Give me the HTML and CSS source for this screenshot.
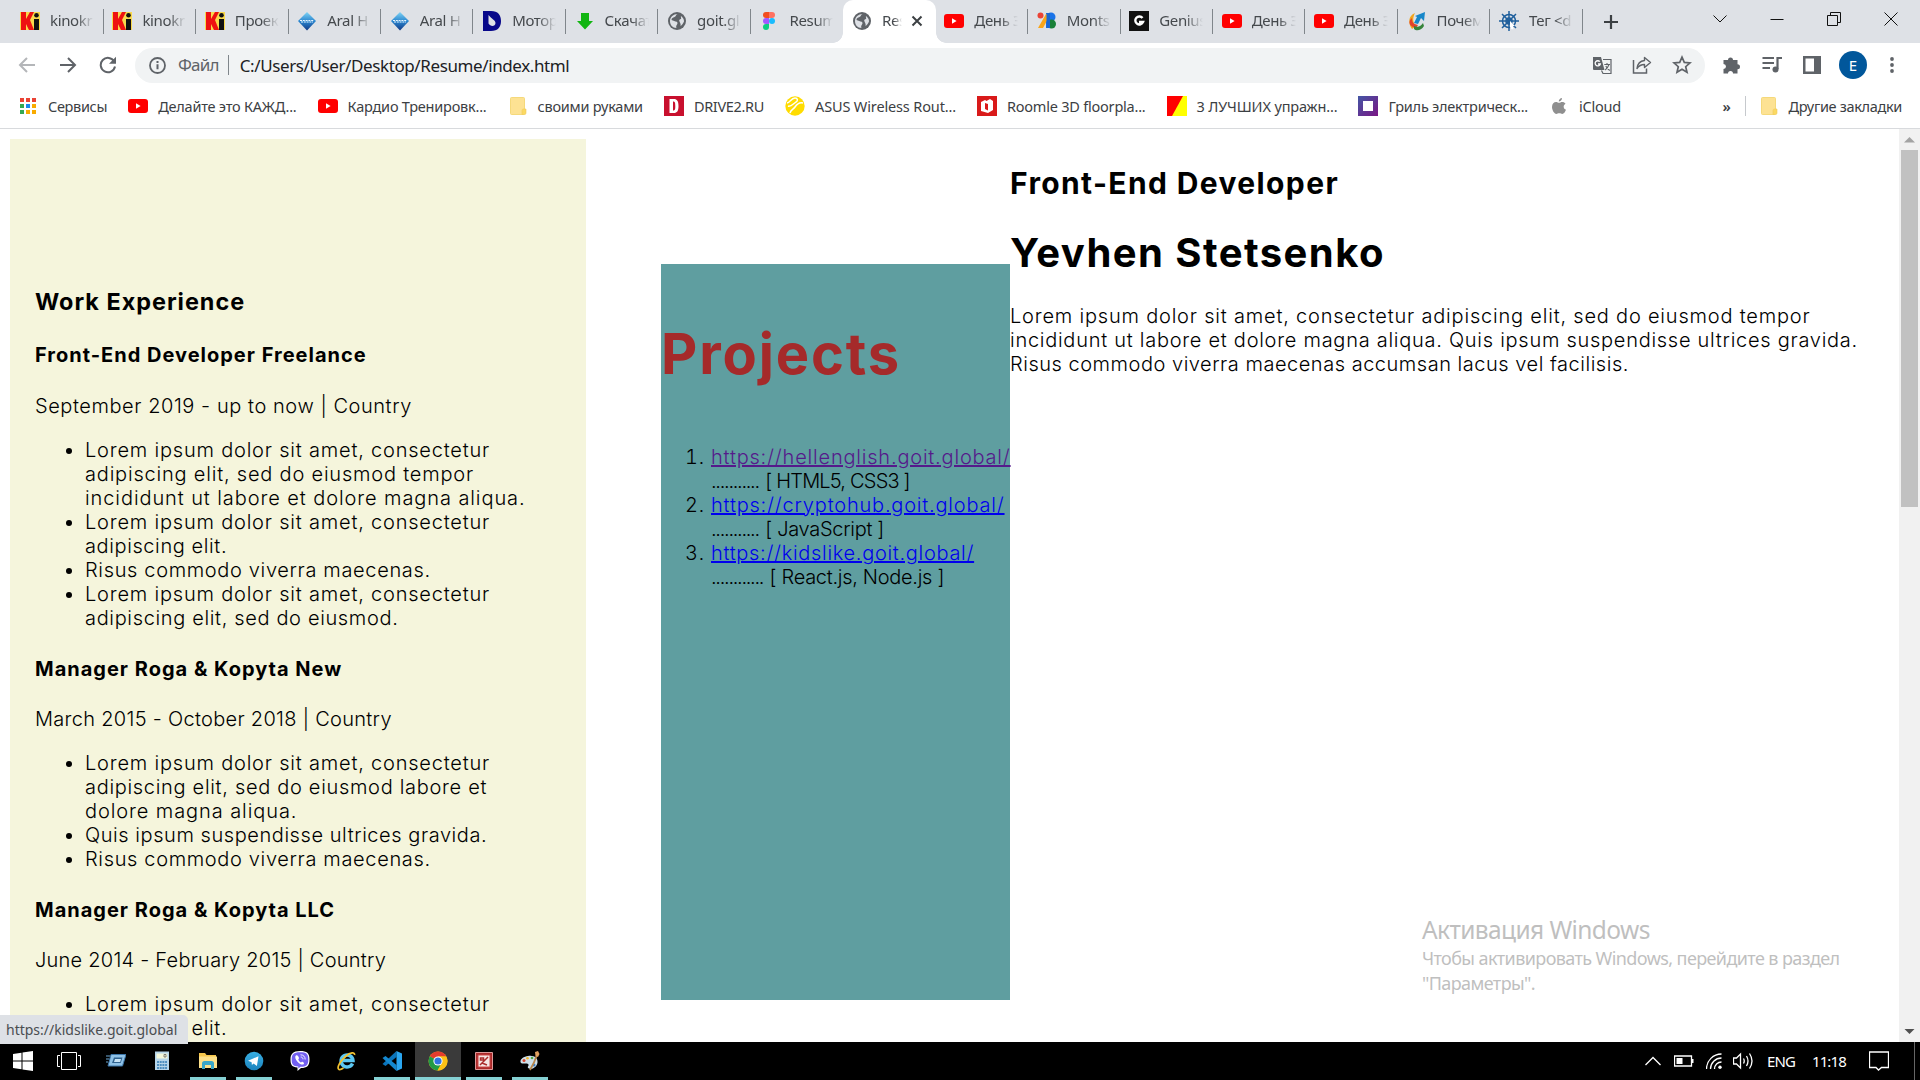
FILE: index.html
```html
<!DOCTYPE html>
<html lang="ru">
<head>
<meta charset="utf-8">
<title>Resume</title>
<link rel="stylesheet" href="styles.css">
</head>
<body>
<svg class="defs" width="0" height="0" aria-hidden="true">
  <defs>
    <linearGradient id="ggem" x1="0" y1="0" x2="0" y2="1"><stop offset="0" stop-color="#7fd3f4"/><stop offset=".5" stop-color="#2a86cf"/><stop offset="1" stop-color="#123a86"/></linearGradient>
    <linearGradient id="gpur" x1="0" y1="0" x2="1" y2="1"><stop offset="0" stop-color="#4357a5"/><stop offset="1" stop-color="#7a1684"/></linearGradient>
    <linearGradient id="gtg" x1="0" y1="0" x2="0" y2="1"><stop offset="0" stop-color="#38aee2"/><stop offset="1" stop-color="#1c83bd"/></linearGradient>
  </defs>
  <symbol id="ki" viewBox="0 0 20 20"><path d="M0 1h20v18H0z" fill="#f9d94c"/><path d="M1 1h5v7l4-7h4l-4 8 4 10h-5L6 13v6H1z" fill="#ee1111"/><path d="M14 8h5v11h-5z" fill="#111"/><circle cx="16.500" cy="4.200" r="2.300" fill="#111"/></symbol>
  <symbol id="gem" viewBox="0 0 20 20"><path d="M10 1l9 9-9 9.500L1 10z" fill="url(#ggem)"/><path d="M3 9.500h14M4 11h12" stroke="#e8f5ff" stroke-width="1" stroke-dasharray="2 .8"/></symbol>
  <symbol id="dblue" viewBox="0 0 20 20"><path d="M1 0h8c7 0 10 4 10 10s-3 10-10 10H1zM6.500 4v8.500c2 3.500 7 3 7-.5 0-3-4-4-7-8z" fill="#08088a" fill-rule="evenodd"/></symbol>
  <symbol id="down" viewBox="0 0 20 20"><path d="M6 2h8v8h4l-8 8.500L2 10h4z" fill="#12b512"/></symbol>
  <symbol id="globe" viewBox="0 0 20 20"><circle cx="10" cy="10" r="9" fill="#5f6368"/><path d="M10.500 3c-2 1-1.500 2.500-3 3s-3 1-3 3l4 1.500c2 0 2.500 1.500 1.500 3s-1 2.500-.5 3.500c-4 0-6.500-3-6.500-7s3.500-7 7.500-7zM14 5c2 1.500 3 3 3 5.500-1 2-2 3.500-3.500 4.500.5-2.500-.5-3-1-4.500-1-1.500.5-2.500 1.500-2.500.5-1-.5-2 0-3z" fill="#dee1e6"/></symbol>
  <symbol id="figma" viewBox="0 0 20 20"><path d="M10 1H7a3 3 0 000 6h3z" fill="#f24e1e"/><path d="M10 1h3a3 3 0 010 6h-3z" fill="#ff7262"/><path d="M10 7H7a3 3 0 000 6h3z" fill="#a259ff"/><circle cx="13" cy="10" r="3" fill="#1abcfe"/><path d="M7 13h3v3a3 3 0 11-3-3z" fill="#0acf83"/></symbol>
  <symbol id="yt" viewBox="0 0 20 20"><rect y="3" width="20" height="14" rx="3" fill="#f00"/><path d="M8 7.300v5.400l4.600-2.700z" fill="#fff"/></symbol>
  <symbol id="gfont" viewBox="0 0 20 20"><circle cx="3.500" cy="4.500" r="3" fill="#ea4335"/><path d="M9 2h4v15H9z" fill="#1a73e8"/><circle cx="14" cy="6" r="4.500" fill="#1a73e8"/><circle cx="14.500" cy="13" r="4.500" fill="#188038"/><path d="M9 3L1 17h5l6-11V3z" fill="#f9a51a"/><path d="M9.500 2h3.500v15H9.500z" fill="#1967d2"/></symbol>
  <symbol id="genius" viewBox="0 0 20 20"><path d="M0 0h20v20H0z" fill="#111"/><path d="M13.500 7a4 4 0 10.500 4h-4" fill="none" stroke="#fff" stroke-width="2.400"/></symbol>
  <symbol id="swirl" viewBox="0 0 20 20"><path d="M8 2C1 5 1 12 5 18l4-3C5 11 6 6 8 2z" fill="#f2a51c"/><path d="M5 7c-5 4-2 9 4 10l2-3c-5-1-6-3-6-7z" fill="#e2432d"/><path d="M8 5l10-4-1 9-3-3-3 6-4-1 3-6z" fill="#1787c9"/><path d="M7 15c4 2 7 0 9-3l1 3c-3 5-8 5-10 3z" fill="#37843a"/></symbol>
  <symbol id="wheel" viewBox="0 0 20 20"><g fill="none" stroke="#1f5f9c" stroke-width="1.500"><circle cx="10" cy="10" r="6.500"/><circle cx="10" cy="10" r="3"/><path d="M10 0v20M0 10h20M3 3l14 14M17 3L3 17"/></g><path d="M11 10l5 5-2 .3.500 3-2 0-1.500-2z" fill="#fff"/></symbol>
  <symbol id="apps" viewBox="0 0 20 20"><path d="M2 2h4v4H2zM8 2h4v4H8zM14 2h4v4h-4z" fill="#ea4335"/><path d="M2 8h4v4H2zM2 14h4v4H2z" fill="#34a853"/><path d="M8 8h4v4H8z" fill="#1a88f0"/><path d="M14 8h4v4h-4zM8 14h4v4H8zM14 14h4v4h-4z" fill="#f9ab00"/></symbol>
  <symbol id="folder" viewBox="0 0 20 20"><rect x="2.500" y="1.500" width="14" height="17" rx="1" fill="#fde293" stroke="#f5d97b"/><path d="M14 18.500v-4q0-1.500 1.500-1.500H18v4q0 1.500-1.500 1.500z" fill="#fbd962" stroke="#f0cb5a" stroke-width=".6"/></symbol>
  <symbol id="drive" viewBox="0 0 20 20"><path d="M0 0h20v20H0z" fill="#c8102e"/><path d="M5.500 3h4.500c3 0 4.500 2 4.500 7s-1.500 7-4.500 7H5.500zM9 5.500v9c2 0 2.300-1 2.300-4.500S11 5.500 9 5.500z" fill="#fff" fill-rule="evenodd"/></symbol>
  <symbol id="asus" viewBox="0 0 20 20"><circle cx="10" cy="10" r="9.700" fill="#ffdc00"/><path d="M2 7c3 0 4-5 8-5 3 0 3 3 1 4-3 2-5 5-8 4M5 17c1-4 3-3 5-6s4-5 8-4" fill="none" stroke="#fff" stroke-width="1.500"/></symbol>
  <symbol id="roomle" viewBox="0 0 20 20"><path d="M0 0h20v20H0z" fill="#d91a1a"/><path d="M4 6l4-2 1.500 1L13 3l3 2v9l-5 3-7-2zM8 7v6l3 1.500V8z" fill="#fff" fill-rule="evenodd"/></symbol>
  <symbol id="diag" viewBox="0 0 20 20"><path d="M0 0h20v20H0z" fill="#ff0"/><path d="M0 0h16L5 20H0z" fill="#f00"/></symbol>
  <symbol id="grill" viewBox="0 0 20 20"><path d="M0 0h20v20H0z" fill="url(#gpur)"/><path d="M5 5h10v10H5z" fill="#fff"/></symbol>
  <symbol id="apple" viewBox="0 0 20 20"><path d="M13 2c0 2-1.500 3.500-3.200 3.500C9.600 3.800 11.200 2.100 13 2zM10 6.800c1 0 1.700-.8 3.300-.8 1.300 0 2.500.7 3.200 1.700-2.700 1.600-2.300 5 .5 6.100-.8 2.200-2.200 4.200-3.700 4.200-1.200 0-1.500-.7-3-.7s-1.900.7-3 .7c-2 0-4.300-4-4.300-7C3 7.800 5 6 7 6c1.300 0 2.200.8 3 .8z" fill="#8f8f8f"/></symbol>
</svg>

<header class="browser">
  <div class="strip">
    <div class="tabs">
      <div class="tab"><svg><use href="#ki"/></svg><span>kinokr</span></div>
      <div class="tab"><svg><use href="#ki"/></svg><span>kinokr</span></div>
      <div class="tab"><svg><use href="#ki"/></svg><span>Проек</span></div>
      <div class="tab"><svg><use href="#gem"/></svg><span>Aral H</span></div>
      <div class="tab"><svg><use href="#gem"/></svg><span>Aral H</span></div>
      <div class="tab"><svg><use href="#dblue"/></svg><span>Мотор</span></div>
      <div class="tab"><svg><use href="#down"/></svg><span>Скачат</span></div>
      <div class="tab"><svg><use href="#globe"/></svg><span>goit.gl</span></div>
      <div class="tab before"><svg><use href="#figma"/></svg><span>Resum</span></div>
      <div class="tab active"><svg><use href="#globe"/></svg><span>Res</span><svg class="close" viewBox="0 0 12 12"><path d="M1.500 1.500l9 9M10.500 1.500l-9 9" stroke="#3c4043" stroke-width="2"/></svg></div>
      <div class="tab"><svg><use href="#yt"/></svg><span>День З</span></div>
      <div class="tab"><svg><use href="#gfont"/></svg><span>Monts</span></div>
      <div class="tab"><svg><use href="#genius"/></svg><span>Genius</span></div>
      <div class="tab"><svg><use href="#yt"/></svg><span>День З</span></div>
      <div class="tab"><svg><use href="#yt"/></svg><span>День З</span></div>
      <div class="tab"><svg><use href="#swirl"/></svg><span>Почем</span></div>
      <div class="tab"><svg><use href="#wheel"/></svg><span>Тег &lt;d</span></div>
    </div>
    <svg class="plus" viewBox="0 0 16 16"><path d="M8 1v14M1 8h14" stroke="#3c4043" stroke-width="2.200"/></svg>
    <div class="winctl">
      <svg width="14" height="14" viewBox="0 0 14 14"><path d="M.5 3.500L7 10l6.500-6.500"/></svg>
      <svg width="14" height="14" viewBox="0 0 14 14"><path d="M.5 7.500h13"/></svg>
      <svg width="14" height="14" viewBox="0 0 14 14"><path d="M.5 3.500h10v10H.5zM3.500 3V.5h10v10H11"/></svg>
      <svg width="14" height="14" viewBox="0 0 14 14"><path d="M.5.5l13 13M13.500.5l-13 13"/></svg>
    </div>
  </div>

  <div class="toolbar">
    <svg class="nav back" viewBox="0 0 18 18"><path d="M17 9H2M9 2L2 9l7 7" stroke="#b4b6b9"/></svg>
    <svg class="nav fwd" viewBox="0 0 18 18"><path d="M1 9h15M9 2l7 7-7 7" stroke="#5f6368"/></svg>
    <svg class="nav reload" viewBox="0 0 18 18"><path d="M15.200 5.500A7.200 7.200 0 1016 10.500" stroke="#5f6368"/><path d="M17 .8v7h-7z" class="tip"/></svg>
    <div class="omnibox">
      <svg class="info" viewBox="0 0 17 17"><circle cx="8.500" cy="8.500" r="7.500" fill="none" stroke="#5f6368" stroke-width="1.800"/><path d="M8.500 7.300v5M8.500 4v2" stroke="#5f6368" stroke-width="2"/></svg>
      <span class="scheme">Файл</span>
      <span class="url">C:/Users/User/Desktop/Resume/index.html</span>
      <svg class="oicon tr" viewBox="0 0 20 20"><path d="M1 2h8l3.500 13H2q-1 0-1-1z" fill="#5f6368"/><path d="M11 4.500h8v14h-8l-1.500-3" fill="none" stroke="#5f6368" stroke-width="1.200"/><path d="M7.800 6.700a2.600 2.600 0 10.500 2.300H6" fill="none" stroke="#fff" stroke-width="1.300"/><path d="M12.300 9.500H18M15 8v1.500M17 9.500q-1.500 4-3.800 5.500M13.800 11q1.500 3 4 4.500" fill="none" stroke="#5f6368" stroke-width="1.100"/></svg>
      <svg class="oicon" viewBox="0 0 20 20"><path d="M1.500 5v13h13v-4.500" fill="none" stroke="#5f6368" stroke-width="1.500"/><path d="M12.500 2.500l6 5-6 5V9.500c-3.500 0-5.500 1-7.500 4 .5-4.500 3-7.500 7.500-8z" fill="none" stroke="#5f6368" stroke-width="1.400" stroke-linejoin="round"/></svg>
      <svg class="oicon" viewBox="0 0 20 20"><path d="M10 2.200l2.300 5.200 5.700.5-4.300 3.800 1.300 5.600-5-3-5 3 1.300-5.600L2 7.900l5.700-.5z" fill="none" stroke="#5f6368" stroke-width="1.700"/></svg>
    </div>
    <div class="actions">
      <svg viewBox="0 0 20 20"><path d="M1.500 5H6a2.500 2.500 0 115 0h4.500v4.200a2.500 2.500 0 110 5V18.500H11a2.500 2.500 0 00-5 0H1.500V14a2.500 2.500 0 000-5z" fill="#5f6368"/></svg>
      <svg viewBox="0 0 20 20"><path d="M.5 3h11.500M.5 8h11.500M.5 13h7.500" stroke="#5f6368" stroke-width="2"/><path d="M15.500 14V3H20" fill="none" stroke="#5f6368" stroke-width="2.200"/><circle cx="13.500" cy="14.500" r="3" fill="#5f6368"/></svg>
      <svg viewBox="0 0 20 20"><path d="M1 1h18v18H1zM3.500 3.500v13H12v-13z" fill="#5f6368" fill-rule="evenodd"/></svg>
      <span class="avatar">E</span>
      <svg viewBox="0 0 20 20"><g fill="#5f6368"><circle cx="10" cy="4" r="1.900"/><circle cx="10" cy="10" r="1.900"/><circle cx="10" cy="16" r="1.900"/></g></svg>
    </div>
  </div>

  <div class="bookmarks">
    <a class="bm tight"><svg><use href="#apps"/></svg><span>Сервисы</span></a>
    <a class="bm"><svg><use href="#yt"/></svg><span>Делайте это КАЖД...</span></a>
    <a class="bm"><svg><use href="#yt"/></svg><span>Кардио Тренировк...</span></a>
    <a class="bm"><svg><use href="#folder"/></svg><span>своими руками</span></a>
    <a class="bm tight"><svg><use href="#drive"/></svg><span>DRIVE2.RU</span></a>
    <a class="bm loose"><svg><use href="#asus"/></svg><span>ASUS Wireless Rout...</span></a>
    <a class="bm"><svg><use href="#roomle"/></svg><span>Roomle 3D floorpla...</span></a>
    <a class="bm loose"><svg><use href="#diag"/></svg><span>3 ЛУЧШИХ упражн...</span></a>
    <a class="bm"><svg><use href="#grill"/></svg><span>Гриль электрическ...</span></a>
    <a class="bm"><svg><use href="#apple"/></svg><span>iCloud</span></a>
    <span class="more">»</span>
    <a class="bm tight other"><svg><use href="#folder"/></svg><span>Другие закладки</span></a>
  </div>
</header>

<main class="viewport">
  <aside class="sidebar">
    <h3>Work Experience</h3>
    <h4>Front-End Developer Freelance</h4>
    <p class="n56">September 2019 - up to now | Country</p>
    <ul>
      <li>Lorem ipsum dolor sit amet, consectetur<br>adipiscing elit, sed do eiusmod tempor<br><span class="n90">incididunt ut labore et dolore magna aliqua.</span></li>
      <li>Lorem ipsum dolor sit amet, consectetur<br><span class="n60">adipiscing elit.</span></li>
      <li class="n65">Risus commodo viverra maecenas.</li>
      <li>Lorem ipsum dolor sit amet, consectetur<br><span class="n65">adipiscing elit, sed do eiusmod.</span></li>
    </ul>
    <h4>Manager Roga &amp; Kopyta New</h4>
    <p class="n30">March 2015 - October 2018 | Country</p>
    <ul>
      <li>Lorem ipsum dolor sit amet, consectetur<br><span class="n70">adipiscing elit, sed do eiusmod labore et</span><br><span class="n90">dolore magna aliqua.</span></li>
      <li class="n56">Quis ipsum suspendisse ultrices gravida.</li>
      <li class="n65">Risus commodo viverra maecenas.</li>
    </ul>
    <h4>Manager Roga &amp; Kopyta LLC</h4>
    <p class="n24">June 2014 - February 2015 | Country</p>
    <ul>
      <li>Lorem ipsum dolor sit amet, consectetur<br><span class="n60">adipiscing elit.</span></li>
    </ul>
  </aside>
  <section class="projects">
    <h1>Projects</h1>
    <ol>
      <li><a class="visited">https://hellenglish.goit.global/</a><br><span class="dots">...........</span> <span class="tech wide">[ HTML5, CSS3 ]</span></li>
      <li><a>https://cryptohub.goit.global/</a><br><span class="dots">...........</span> <span class="tech">[ JavaScript ]</span></li>
      <li><a class="n70">https://kidslike.goit.global/</a><br><span class="dots">............</span> <span class="tech">[ React.js, Node.js ]</span></li>
    </ol>
  </section>
  <section class="about">
    <h2>Front-End Developer</h2>
    <h1>Yevhen Stetsenko</h1>
    <p>Lorem ipsum dolor sit amet, consectetur adipiscing elit, sed do eiusmod tempor<br><span class="n73">incididunt ut labore et dolore magna aliqua. Quis ipsum suspendisse ultrices gravida.</span><br><span class="n52">Risus commodo viverra maecenas accumsan lacus vel facilisis.</span></p>
  </section>
  <div class="scrollbar">
    <svg viewBox="0 0 21 21"><path d="M5 13.500h11L10.500 8z" fill="#a3a3a3"/></svg>
    <i></i>
    <svg viewBox="0 0 21 21"><path d="M5.500 8h10l-5 5z" fill="#505050"/></svg>
  </div>
  <div class="watermark"><b>Активация Windows</b>Чтобы активировать Windows, перейдите в раздел<br>"Параметры".</div>
</main>
<div class="status">https://kidslike.goit.global</div>

<footer class="taskbar">
  <div class="apps">
    <div class="app"><svg viewBox="0 0 20 20"><path d="M0 3l8.500-1.300v7.800H0zM9.500 1.500L20 0v9.500H9.500zM0 10.500h8.500v7.800L0 17zM9.500 10.500H20V20L9.500 18.500z" fill="#fff"/></svg></div>
    <div class="app"><svg class="tv" viewBox="0 0 24 20"><path d="M4.500 1.500h15v17h-15zM3 4.500H.5v11H3M21 4.500h2.500v11H21" fill="none" stroke="#fff"/></svg></div>
    <div class="app"><svg viewBox="0 0 20 20"><path d="M5 3.500h15L16.500 15H2z" fill="#8fc1e6" stroke="#3d77aa"/><path d="M8 6.500h8.500l-1.800 5.500H6z" fill="#2f628f"/><path d="M9 8h6l-.8 3H8z" fill="#c6e2f5"/><path d="M0 5h4M0 8h3M0 11h2" stroke="#6ea9d4"/></svg></div>
    <div class="app"><svg viewBox="0 0 20 20"><path d="M3 .5h14v18.500H3z" fill="#b6d5ea"/><path d="M4.500 2.500h11v5h-11z" fill="#f4f8dc"/><path d="M5 11h10M5 14h10M5 17h10" stroke="#4f8fc0" stroke-width="2" stroke-dasharray="2 .7"/><path d="M12 3.500h2V6h-2z" fill="none" stroke="#555" stroke-width=".7"/></svg></div>
    <div class="app run"><svg viewBox="0 0 20 20"><path d="M1 2h6l1.500 2H18v13H1z" fill="#f6c64b"/><path d="M1 5.500h18V17H1z" fill="#fde08a"/><path d="M4 18v-5.500q0-2.500 2.500-2.500h7q2.500 0 2.500 2.500V18h-3v-4H7v4z" fill="#3aa7c9"/></svg></div>
    <div class="app run"><svg viewBox="0 0 20 20"><circle cx="10" cy="10" r="9.300" fill="url(#gtg)"/><path d="M4 9.800l10.500-4.500-1.600 9.700-3.400-2.500-1.600 1.600-.3-2.800z" fill="#fff"/></svg></div>
    <div class="app"><svg viewBox="0 0 20 20"><path d="M10 0c7 0 9.500 2 9.500 8.500S17 17 11 17l-3.500 3v-3.500C2 16 .5 14 .5 8.500S3 0 10 0z" fill="#fff"/><path d="M10 1.200c6.500 0 8.300 1.500 8.300 7.300s-1.800 7.300-7.800 7.300L8.300 17.500V15.500C3 15 1.700 13.500 1.700 8.500S3.500 1.200 10 1.200z" fill="#7360f2"/><path d="M6 4.500c-1.500 1-.5 4 1.500 6.200S12 14 13.200 13.500s1.200-1.800-.7-2.700c-1 0-1 .8-1.700.6C9.500 10.800 8.700 9.700 8.300 8.500c0-.6.8-.7.700-1.500C8.500 5.500 7.300 3.800 6 4.500z" fill="#fff"/><path d="M10.500 3.800c3 0 4.700 2 4.700 4.700M10.700 6c1.400 0 2.300.9 2.300 2.300" fill="none" stroke="#fff" stroke-width=".9"/></svg></div>
    <div class="app"><svg viewBox="0 0 20 20"><path d="M16.500 12.500a6 6 0 11.500-3H6" fill="none" stroke="#5cc8f2" stroke-width="3.400"/><path d="M18.500 4c.5-3-4-3-9 1.500C4 10.500 1 16 2.500 18c.8 1 3 .3 5-1" fill="none" stroke="#f2c230" stroke-width="1.700"/></svg></div>
    <div class="app run"><svg viewBox="0 0 20 20"><path d="M14.500 0v6L3.500 15 .5 13z" fill="#0a74bb"/><path d="M14.500 20v-6L3.500 5l-3 2z" fill="#1488cf"/><path d="M14.500 0L20 2.500v15L14.500 20z" fill="#2aa6f0"/></svg></div>
    <div class="app run current"><svg viewBox="0 0 20 20"><circle cx="10" cy="10" r="9.500" fill="#fbc116"/><path d="M10 10L1.800 5.200A9.500 9.500 0 0118.300 5.500H10z" fill="#e33b2e"/><path d="M10 10l-8.200-4.800A9.500 9.500 0 009.500 19.500l4.500-8z" fill="#229a46"/><path d="M10 5.500h8.300a9.500 9.500 0 01-8.800 14L14 12z" fill="#fbc116"/><circle cx="10" cy="10" r="4.600" fill="#fff"/><circle cx="10" cy="10" r="3.600" fill="#2f73e0"/></svg></div>
    <div class="app run"><svg viewBox="0 0 20 20"><path d="M1.500 1.500h17v17h-17z" fill="#a92b2b" stroke="#d99"/><path d="M4 4h12v12H4z" fill="#f5e6e4" stroke="#c44"/><path d="M6 14l8-8M6.500 7h3v2h-3zM8 12l5 2" stroke="#a92b2b" stroke-width="1.500" fill="none"/></svg></div>
    <div class="app run"><svg viewBox="0 0 20 20"><path d="M8 5c6-1 10 2 9.500 6.500S12 19 9 17.500s1-3-1-4.500-7 1-7.500-2S4 5.500 8 5z" fill="#cfe0ea"/><circle cx="4" cy="9.500" r="1.500" fill="#d9482f"/><circle cx="7.500" cy="7.300" r="1.300" fill="#f0b429"/><circle cx="12" cy="7" r="1.300" fill="#4fa94d"/><circle cx="14" cy="14" r="1.500" fill="#3b7dc4"/><path d="M10 19c3-5 5-9 6.500-14" stroke="#b8864b" stroke-width="1.800" fill="none"/><path d="M15.500 5L15 1l3-1 1.500 3-1.500 3z" fill="#e0a060"/></svg></div>
  </div>
  <div class="tray">
    <svg width="16" height="10" viewBox="0 0 16 10"><path d="M.5 9L8 1.500 15.500 9"/></svg>
    <svg class="bat" width="20" height="12" viewBox="0 0 20 12"><path d="M.5 1h17v10H.5z"/><path d="M2.500 3h6v6h-6zM18 4h1.500v4H18z" class="solid"/></svg>
    <svg class="wifi" width="16" height="16" viewBox="0 0 16 16"><path d="M.5 16A15 15 0 0115.500 1M4.500 16a11 11 0 0111-11M8.500 16a7 7 0 017-7"/><circle cx="14" cy="14.300" r="1.700" class="solid"/></svg>
    <svg class="vol" width="21" height="18" viewBox="0 0 21 18"><path d="M.5 6h3L7.500 2v14l-4-4h-3zM10.500 6.500q1.500 2.500 0 5M13.500 4q3 5 0 10M16.500 1.500q5 7.500 0 15"/></svg>
    <span class="lang">ENG</span>
    <span class="clock">11:18</span>
    <svg class="note" width="20" height="20" viewBox="0 0 20 20"><path d="M.5 1h19v15.500h-7L9.500 19 7 16.500H.5z"/></svg>
    <i class="peek"></i>
  </div>
</footer>
</body>
</html>
```
FILE: styles.css
```css
* { box-sizing: border-box; }
body { margin: 0; width: 1920px; height: 1080px; overflow: hidden; position: relative; display: flex; flex-direction: column; background: #fff; font-family: "Noto Sans", "Open Sans", sans-serif; }
.defs { position: absolute; }
svg { flex: none; }

/* browser chrome */
.browser { height: 129px; flex: none; border-bottom: 1px solid #d8dadd; }
.strip { height: 43px; background: #dee1e6; display: flex; align-items: center; padding-left: 11.300px; }
.tabs { display: flex; align-self: stretch; }
.tab { width: 92.450px; display: flex; align-items: center; padding: 0 0 2px 8.700px; position: relative; font-size: 15px; letter-spacing: -.35px; color: #45494d; }
.tab svg { width: 20px; height: 20px; }
.tab span { width: 44px; margin-left: 10px; margin-top: -2px; overflow: hidden; white-space: nowrap; mask-image: linear-gradient(90deg, #000 60%, transparent 100%); }
.tab::after { content: ""; position: absolute; right: 0; top: 9px; width: 1px; height: 25px; background: #80868b; }
.tab.before::after { display: none; }
.tab.active { background: #fff; border-radius: 10px 10px 0 0; }
.tab.active::before, .tab.active::after { content: ""; position: absolute; top: auto; bottom: 0; width: 10px; height: 10px; }
.tab.active::before { left: -10px; background: radial-gradient(circle at 0 0, transparent 9.500px, #fff 10px); }
.tab.active::after { right: -10px; background: radial-gradient(circle at 100% 0, transparent 9.500px, #fff 10px); }
.tab.active span { width: 20px; }
.tab.active .close { width: 12px; height: 12px; margin-left: 9px; }
.plus { width: 16px; height: 16px; margin-left: 20px; }
.winctl { margin-left: auto; display: flex; gap: 43px; padding-right: 22px; align-items: center; margin-bottom: 6px; }
.winctl path { fill: none; stroke: #111; stroke-width: 1; }
.toolbar { height: 44px; display: flex; align-items: center; padding-left: 18px; }
.nav { width: 18px; height: 18px; }
.nav path { fill: none; stroke-width: 2; }
.nav .tip { fill: #5f6368; }
.nav.fwd { margin-left: 23px; }
.nav.reload { margin-left: 22px; }
.omnibox { width: 1570px; height: 35px; margin-left: 18px; background: #f1f3f4; border-radius: 18px; display: flex; align-items: center; padding: 0 13px 0 14px; font-size: 17px; color: #202124; }
.info { width: 17px; height: 17px; }
.scheme { margin-left: 12px; padding-right: 9px; letter-spacing: -.8px; color: #5f6368; line-height: 20px; border-right: 1px solid #80868b; }
.url { margin-left: 11px; letter-spacing: -.39px; }
.oicon { width: 20px; height: 20px; margin-left: 20px; }
.oicon.tr { margin-left: auto; }
.actions { display: flex; align-items: center; gap: 20px; margin-left: 17px; }
.actions svg { width: 20px; height: 20px; }
.actions svg:last-child { margin-left: -5px; }
.avatar { width: 28px; height: 28px; margin-left: -3px; border-radius: 50%; background: #01579b; color: #fff; font-size: 15px; display: grid; place-items: center; }
.bookmarks { height: 38px; display: flex; align-items: center; padding: 0 18px; font-size: 14.500px; letter-spacing: -.22px; color: #3c4043; gap: 21px; }
.bm { display: flex; align-items: center; gap: 10px; white-space: nowrap; }
.bm svg { width: 20px; height: 20px; }
.tight { letter-spacing: -.33px; }
.loose { letter-spacing: -.14px; }
.more { margin-left: auto; margin-right: -7px; font-weight: 600; }
.other { border-left: 1px solid #c6c9cd; padding-left: 13px; }

/* page */
.viewport { height: 913px; flex: none; position: relative; display: flex; align-items: flex-start; padding: 10px 0 0 10px; font-family: Inter, sans-serif; font-size: 20px; line-height: 24px; font-weight: 300; letter-spacing: .8px; color: #000; overflow: hidden; white-space: nowrap; }
.sidebar { width: 576px; height: 903px; background: beige; padding: 149.300px 25px 0; overflow: hidden; }
h1, h2, h3, h4, p, ul, ol { margin: 0; }
h3 { font-size: 23.400px; line-height: 28.500px; font-weight: 700; margin-bottom: 26.600px; letter-spacing: 1px; }
h4 { font-size: 20px; font-weight: 700; margin: 26.600px 0; letter-spacing: 1px; }
p { margin: 20px 0; }
ul, ol { padding-left: 50px; }
.n24 { letter-spacing: .24px; }
.n30 { letter-spacing: .3px; }
.n52 { letter-spacing: .52px; }
.n56 { letter-spacing: .56px; }
.n60 { letter-spacing: .6px; }
.n65 { letter-spacing: .65px; }
.n70 { letter-spacing: .69px; }
.n73 { letter-spacing: .73px; }
.n90 { letter-spacing: .91px; }
.projects { margin: 125px 0 0 75px; width: 349px; height: 736px; background: cadetblue; }
.projects h1 { color: brown; font-size: 56px; line-height: 68px; font-weight: 700; letter-spacing: 1.870px; padding-top: 56px; margin-bottom: 57px; }
.projects a { color: #00e; text-decoration: underline; }
.projects a.visited { color: #551a8b; }
.dots { letter-spacing: -1.300px; }
.tech { letter-spacing: -.3px; }
.tech.wide { letter-spacing: -.8px; }
.about h2 { font-size: 30px; line-height: 36px; margin-top: 26px; font-weight: 700; letter-spacing: 1.376px; }
.about h1 { font-size: 40px; line-height: 48px; margin: 28px 0 27px; font-weight: 700; letter-spacing: 1.450px; }
.scrollbar { position: absolute; right: 0; top: 0; bottom: 0; width: 21px; background: #f1f1f1; display: flex; flex-direction: column; }
.scrollbar svg { width: 21px; height: 21px; }
.scrollbar i { height: 357px; margin: 0 2px auto; background: #c1c1c1; }
.watermark { position: absolute; left: 1422px; top: 784px; color: #bfbfbf; font: 400 18px/25px "Noto Sans", sans-serif; letter-spacing: -.6px; }
.watermark b { display: block; font-weight: 400; font-size: 24.500px; line-height: 33px; }
.status { position: absolute; left: 0; top: 1015px; height: 29px; width: 188px; background: #dee1e6; border-top-right-radius: 5px; font-size: 14px; line-height: 29px; padding-left: 6px; color: #4a4d51; z-index: 1; }

/* taskbar */
.taskbar { height: 38px; background: #000; display: flex; justify-content: space-between; color: #fff; }
.apps { display: flex; }
.app { width: 46px; display: grid; place-items: center; position: relative; }
.app svg { width: 20px; height: 20px; }
.app:nth-child(n+3) { left: 1px; }
.app .tv { width: 24px; }
.app.run::after { content: ""; position: absolute; left: 5px; right: 5px; bottom: 0; height: 3px; background: #85d0d3; }
.app.current { background: #3a3a3a; }
.app.current::after { left: 0; right: 0; }
.tray { display: flex; align-items: center; font-size: 15px; }
.tray path { fill: none; stroke: #fff; stroke-width: 1.300; }
.tray .solid { fill: #fff; stroke: none; }
.bat { margin-left: 13px; }
.wifi { margin-left: 12px; }
.vol { margin-left: 11px; }
.lang { margin-left: 13px; width: 28px; letter-spacing: -.9px; }
.clock { margin-left: 17px; width: 35px; letter-spacing: -.9px; }
.note { margin-left: 22px; }
.peek { width: 1px; align-self: stretch; background: #666; margin: 0 5px 0 25px; }
```
